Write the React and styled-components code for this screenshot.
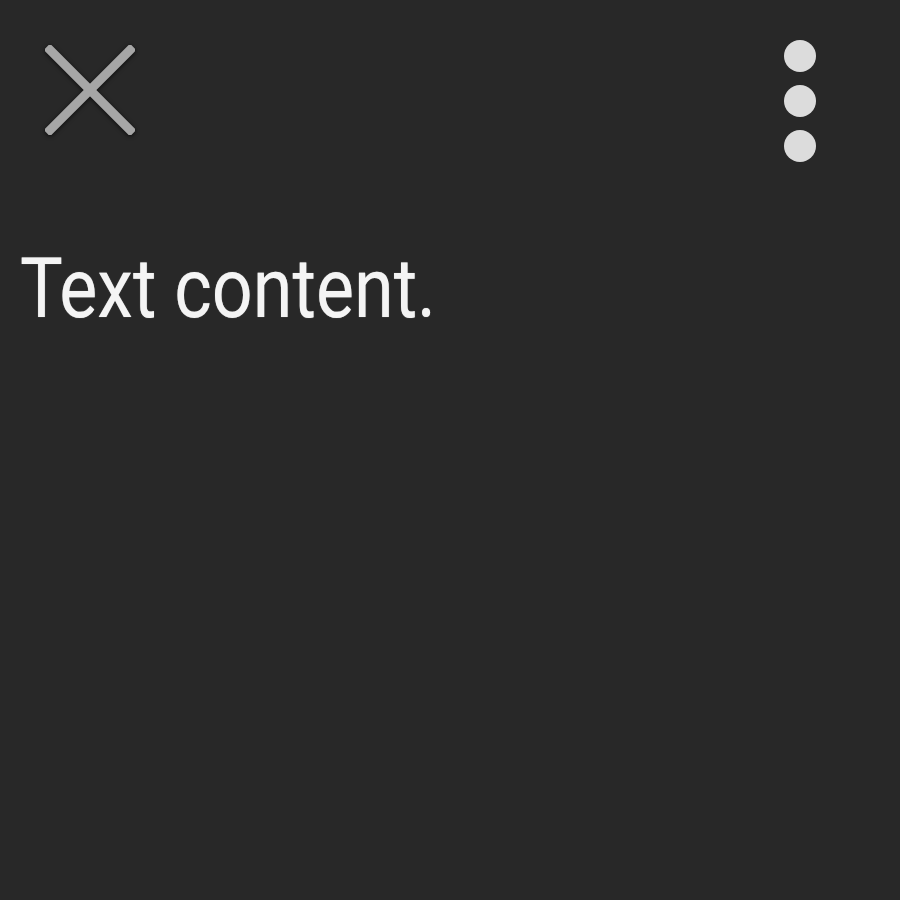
import React from "react";
import styled, { createGlobalStyle } from "styled-components";

const GlobalStyle = createGlobalStyle`
  html, body {
    margin: 0;
    padding: 0;
    background: #282828;
  }
`;

const Screen = styled.div({
  width: "900px",
  height: "900px",
  backgroundColor: "#282828",
  display: "flex",
  flexDirection: "column",
  overflow: "hidden",
});

const TopBar = styled.div({
  display: "flex",
  justifyContent: "space-between",
  alignItems: "flex-start",
  padding: "40px 84px 0 45px",
});

const CloseButton = styled.div({
  width: "90px",
  height: "90px",
  marginTop: "5px",
  filter: "drop-shadow(0 1px 2px rgba(0,0,0,0.7))",
});

const MoreColumn = styled.div({
  display: "flex",
  flexDirection: "column",
  gap: "13px",
});

const Dot = styled.div({
  width: "32px",
  height: "32px",
  borderRadius: "50%",
  backgroundColor: "#dcdcdc",
  filter: "blur(0.6px)",
});

const Body = styled.p({
  margin: "85px 0 0 0",
  paddingLeft: "23px",
  fontFamily: "Roboto, 'Liberation Sans', sans-serif",
  fontSize: "83px",
  lineHeight: "83px",
  color: "#f4f4f4",
  whiteSpace: "nowrap",
  transform: "scaleX(0.865)",
  transformOrigin: "left center",
  textShadow: "0 0 1px rgba(244,244,244,0.6)",
});

export default function App() {
  return (
    <Screen>
      <GlobalStyle />
      <TopBar>
        <CloseButton>
          <svg width="90" height="90" viewBox="0 0 90 90">
            <g stroke="#a6a6a6" strokeWidth="9" strokeLinecap="square">
              <line x1="5" y1="5" x2="85" y2="85" />
              <line x1="85" y1="5" x2="5" y2="85" />
            </g>
          </svg>
        </CloseButton>
        <MoreColumn>
          <Dot />
          <Dot />
          <Dot />
        </MoreColumn>
      </TopBar>
      <Body>Text content.</Body>
    </Screen>
  );
}
